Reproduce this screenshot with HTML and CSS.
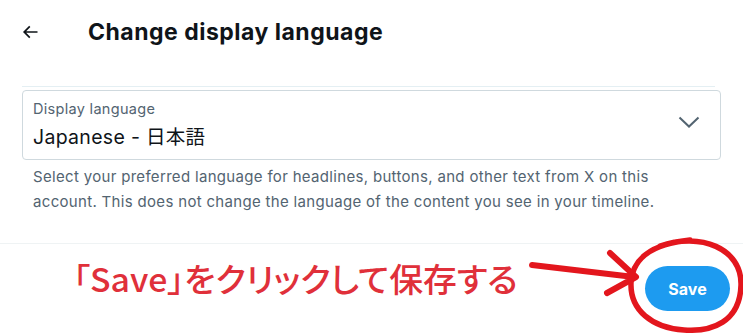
FILE: index.html
```html
<!DOCTYPE html>
<html lang="ja">
<head>
  <meta charset="UTF-8">
  <title>Change display language</title>
  <link rel="stylesheet" href="styles.css">
</head>
<body>

<div class="page">
  <div class="top-bar">
    <button class="back-btn" aria-label="Back">
      <svg width="20" height="20" viewBox="0 0 24 24"><path d="M7.414 13l5.043 5.04-1.414 1.42L3.586 12l7.457-7.46 1.414 1.42L7.414 11H21v2H7.414z" fill="#0f1419"/></svg>
    </button>
    <h1 class="title">Change display language</h1>
  </div>

  <div class="settings">
    <div class="focus-line"></div>
    <div class="select-box">
      <div class="select-text">
        <span class="select-label">Display language</span>
        <span class="select-value">Japanese - 日本語</span>
      </div>
      <svg class="chevron" width="22" height="12" viewBox="0 0 22 12"><path d="M1.5 1.5 11 10.5 20.5 1.5" fill="none" stroke="#536471" stroke-width="2"/></svg>
    </div>
    <p class="hint">Select your preferred language for headlines, buttons, and other text from X on this account. This does not change the language of the content you see in your timeline.</p>
  </div>

  <div class="action-bar">
    <span class="note">「Save」をクリックして保存する</span>
    <button class="save-btn">Save</button>
    <svg class="marker" width="743" height="103" viewBox="0 230 743 103">
      <path d="M532 265 L634 277 M610 253 L636 277 L607 293" fill="none" stroke="#e3161d" stroke-width="6" stroke-linecap="round" stroke-linejoin="round"/>
      <path d="M660 246 C700 232 742 248 741 285 C740 322 712 332 684 330 C652 328 630 310 631 283 C632 260 650 244 690 240" fill="none" stroke="#e3161d" stroke-width="5.5" stroke-linecap="round"/>
    </svg>
  </div>
</div>

</body>
</html>
```

FILE: styles.css
```css
body {
  margin: 0;
  background: #fff;
  font-family: Inter, "Noto Sans CJK JP", sans-serif;
  color: #0f1419;
}
.page {
  width: 743px;
  height: 333px;
  overflow: hidden;
}
.top-bar {
  display: flex;
  align-items: center;
  height: 64px;
  padding-left: 20px;
}
.back-btn {
  display: flex;
  border: 0;
  background: none;
  padding: 0;
  width: 68px;
}
.title {
  margin: 0;
  font-size: 23px;
  font-weight: 700;
  letter-spacing: 0.5px;
}
.settings {
  padding: 22px 22px 0;
}
.focus-line {
  height: 1px;
  background: #e4eff3;
  margin-right: 6px;
  margin-bottom: 3px;
}
.select-box {
  display: flex;
  align-items: center;
  justify-content: space-between;
  height: 68px;
  border: 1px solid #cfd9de;
  border-radius: 4px;
  padding: 0 20px 0 10px;
}
.select-text {
  display: flex;
  flex-direction: column;
  gap: 4px;
}
.select-label {
  font-size: 14.5px;
  letter-spacing: 0.3px;
  color: #536471;
}
.select-value {
  font-size: 19.5px;
  letter-spacing: 0.3px;
}
.chevron {
  margin-top: -6px;
}
.hint {
  margin: 4px 0 0 11px;
  width: 665px;
  font-size: 15px;
  letter-spacing: 0.32px;
  line-height: 25px;
  color: #536471;
}
.action-bar {
  position: relative;
  display: flex;
  align-items: center;
  justify-content: space-between;
  height: 89px;
  margin-top: 29px;
  border-top: 1px solid #eff3f4;
  padding: 0 13px 0 73px;
}
.note {
  font-family: "Noto Sans CJK JP", sans-serif;
  font-feature-settings: "palt";
  font-size: 33px;
  font-weight: 500;
  color: #e0303a;
  transform: scaleX(1.025);
  transform-origin: left center;
  margin-top: -22px;
}
.save-btn {
  width: 85px;
  height: 45px;
  border: 0;
  border-radius: 23px;
  background: #1d9bf0;
  color: #fff;
  font-family: Inter, sans-serif;
  font-size: 16px;
  font-weight: 700;
}
.marker {
  position: absolute;
  left: 0;
  top: -14px;
  pointer-events: none;
}
```
